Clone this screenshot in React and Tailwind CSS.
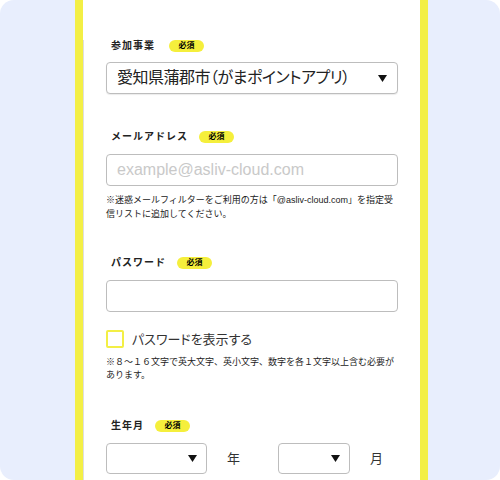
const jp = { fontFamily: '"Liberation Sans", "Noto Sans CJK JP", sans-serif' };

function Badge({ className }) {
  return (
    <span className={"flex h-[12px] w-[35px] items-center justify-center rounded-full bg-[#f5ef3c] text-[8px] font-bold leading-none text-black " + className}>
      必須
    </span>
  );
}

function Label({ text, badgeClass, className }) {
  return (
    <div className={"flex h-[12px] items-center pl-[5px] " + className}>
      <span className="text-[10px] font-bold leading-none tracking-[1px] text-[#222]">{text}</span>
      <Badge className={badgeClass} />
    </div>
  );
}

function Arrow() {
  return (
    <svg width="9" height="7" viewBox="0 0 9 7">
      <polygon points="0,0 9,0 4.5,7" fill="#111" />
    </svg>
  );
}

export default function App() {
  return (
    <div className="h-[480px] w-[500px] bg-white" style={jp}>
      <div className="flex h-full overflow-hidden rounded-[14px] bg-[#e8eefd] pl-[75px]">
        <div className="h-full w-[353px] border-x-8 border-[#f3ef45] bg-white">
          <div className="h-full border-l border-[#dedede] px-[22px]">
            <Label text="参加事業" badgeClass="ml-[14px]" className="mt-[40px]" />
            <div className="mt-[10px] flex h-[32px] items-center justify-between rounded-[4px] border border-[#bdbdbd] bg-white pl-[10px] pr-[10px] shadow-[0_1px_1px_rgba(0,0,0,0.08)]">
              <span className="text-[16px] leading-none tracking-[-0.5px] text-[#222] [font-feature-settings:'palt']">愛知県蒲郡市（がまポイントアプリ）</span>
              <Arrow />
            </div>

            <Label text="メールアドレス" badgeClass="ml-[11px]" className="mt-[37px]" />
            <div className="mt-[11px] flex h-[32px] items-center rounded-[4px] border border-[#bdbdbd] bg-white pl-[10px]">
              <span className="text-[16px] leading-none text-[#c9c9c9]">example@asliv-cloud.com</span>
            </div>
            <p className="mt-[7px] text-[9px] leading-[14px] text-[#222]">
              ※迷惑メールフィルターをご利用の方は「@asliv-cloud.com」を指定受信リストに追加してください。
            </p>

            <Label text="パスワード" badgeClass="ml-[11px]" className="mt-[36px]" />
            <div className="mt-[11px] h-[32px] rounded-[4px] border border-[#bdbdbd] bg-white" />
            <div className="mt-[18px] flex items-center">
              <span className="h-[18px] w-[18px] rounded-[2px] border-2 border-[#f3ef45] bg-white" />
              <span className="ml-[8px] text-[13px] leading-none text-[#333] [font-feature-settings:'palt']">パスワードを表示する</span>
            </div>
            <p className="mt-[8px] text-[9px] leading-[13px] text-[#222]">
              ※８～１６文字で英大文字、英小文字、数字を各１文字以上含む必要があります。
            </p>

            <Label text="生年月" badgeClass="ml-[11px]" className="mt-[38px]" />
            <div className="mt-[11px] flex items-center">
              <div className="flex h-[31px] w-[101px] items-center justify-end rounded-[4px] border border-[#bdbdbd] bg-white pr-[9px]">
                <Arrow />
              </div>
              <span className="ml-[20px] text-[13px] leading-none text-[#333]">年</span>
              <div className="ml-[38px] flex h-[31px] w-[72px] items-center justify-end rounded-[4px] border border-[#bdbdbd] bg-white pr-[9px]">
                <Arrow />
              </div>
              <span className="ml-[20px] text-[13px] leading-none text-[#333]">月</span>
            </div>
          </div>
        </div>
      </div>
    </div>
  );
}
